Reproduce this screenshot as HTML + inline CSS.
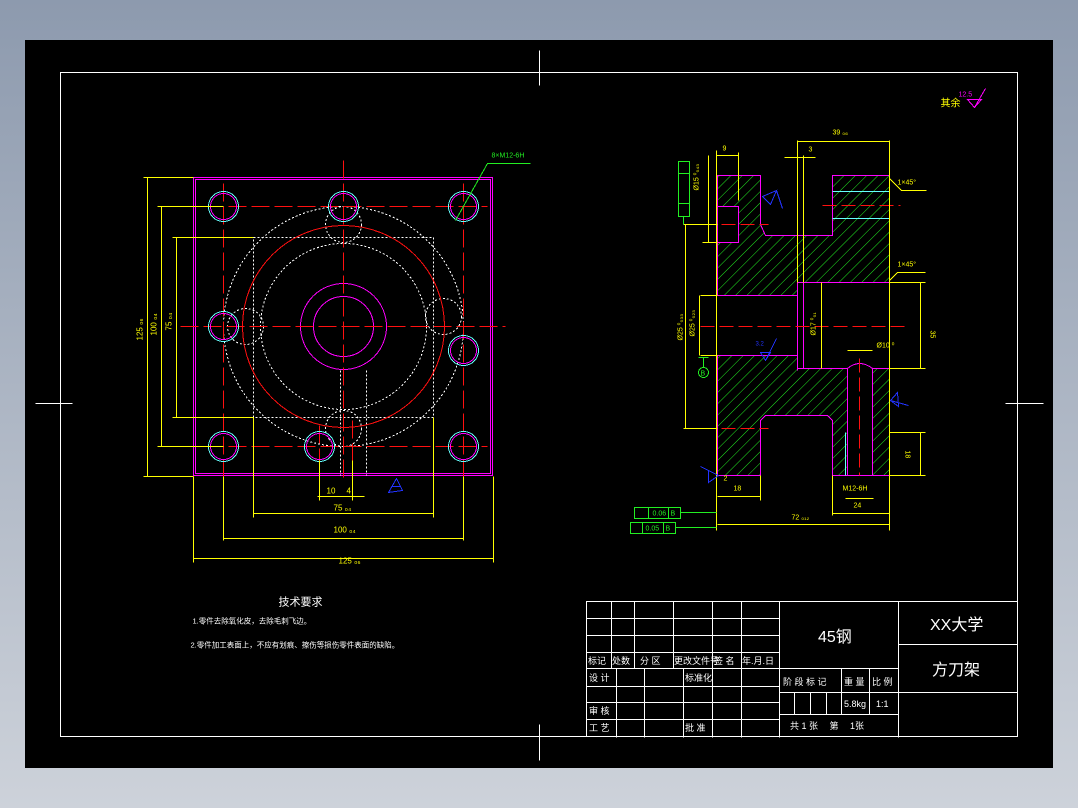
<!DOCTYPE html>
<html><head><meta charset="utf-8"><style>
html,body{margin:0;padding:0;width:1078px;height:808px;overflow:hidden;background:linear-gradient(#8d9aae,#cdd2da);}
svg{display:block}
text{font-family:"Liberation Sans","Noto Sans CJK SC",sans-serif;}
</style></head><body>
<svg width="1078" height="808" viewBox="0 0 1078 808" shape-rendering="crispEdges">
<defs>
<pattern id="h" width="8" height="8" patternUnits="userSpaceOnUse" patternTransform="rotate(45)">
<line x1="0" y1="0" x2="0" y2="8" stroke="#22ee22" stroke-width="1"/>
</pattern>
</defs>
<rect x="25" y="40" width="1028" height="728" fill="#000"/>
<g transform="translate(0.5,0.5)">
<rect x="60" y="72" width="957" height="664" fill="none" stroke="#fff" stroke-width="1"/>
<g stroke="#fff" stroke-width="1">
<line x1="539" y1="50" x2="539" y2="85"/><line x1="539" y1="724" x2="539" y2="760"/>
<line x1="35" y1="403" x2="72" y2="403"/><line x1="1005" y1="403" x2="1043" y2="403"/>
</g>

<!-- LEFT VIEW -->
<g fill="none">
<rect x="193" y="177" width="299" height="298" stroke="#ff00ff" stroke-width="1"/>
<rect x="195" y="179" width="295" height="294" stroke="#ff00ff" stroke-width="1"/>
<g stroke="#fff" stroke-dasharray="2,2" stroke-width="1">
<circle cx="343" cy="326" r="120"/><circle cx="343" cy="326" r="83"/>
<rect x="253" y="237" width="180" height="180"/>
<circle cx="343" cy="224" r="18"/><circle cx="245" cy="326" r="18"/><circle cx="443" cy="316" r="18"/>
<circle cx="343" cy="428" r="18"/>
<line x1="340" y1="370" x2="340" y2="475"/><line x1="366" y1="370" x2="366" y2="475"/>
</g>
<circle cx="343" cy="326" r="101" stroke="#ff1010" stroke-width="1"/>
<circle cx="343" cy="326" r="43" stroke="#ff00ff" stroke-width="1"/>
<circle cx="343" cy="326" r="30" stroke="#ff00ff" stroke-width="1"/>
<g stroke="#ff1010" stroke-width="1" stroke-dasharray="18,5">
<line x1="343" y1="160" x2="343" y2="480"/>
<line x1="180" y1="326" x2="505" y2="326"/>
<line x1="205" y1="206" x2="487" y2="206"/><line x1="205" y1="446" x2="487" y2="446"/>
<line x1="223" y1="183" x2="223" y2="490"/><line x1="463" y1="183" x2="463" y2="490"/>
<line x1="352" y1="420" x2="352" y2="475"/><line x1="319" y1="425" x2="319" y2="470"/>
</g>
<g stroke="#ff00ff" stroke-width="1">
<circle cx="223" cy="206" r="13"/><circle cx="343" cy="206" r="13"/><circle cx="463" cy="206" r="13"/>
<circle cx="223" cy="326" r="13"/><circle cx="463" cy="350" r="13"/>
<circle cx="223" cy="446" r="13"/><circle cx="319" cy="446" r="13"/><circle cx="463" cy="446" r="13"/>
</g>
<g stroke="#66ffff" stroke-width="1">
<circle cx="223" cy="206" r="15"/><circle cx="343" cy="206" r="15"/><circle cx="463" cy="206" r="15"/>
<circle cx="223" cy="326" r="15"/><circle cx="463" cy="350" r="15"/>
<circle cx="223" cy="446" r="15"/><circle cx="319" cy="446" r="15"/><circle cx="463" cy="446" r="15"/>
</g>
<g stroke="#ffff00" stroke-width="1">
<line x1="143" y1="177" x2="193" y2="177"/><line x1="143" y1="476" x2="193" y2="476"/><line x1="147" y1="177" x2="147" y2="476"/>
<line x1="157" y1="206" x2="223" y2="206"/><line x1="157" y1="446" x2="223" y2="446"/><line x1="161" y1="206" x2="161" y2="446"/>
<line x1="172" y1="237" x2="253" y2="237"/><line x1="172" y1="417" x2="253" y2="417"/><line x1="176" y1="237" x2="176" y2="417"/>
<line x1="193" y1="476" x2="193" y2="562"/><line x1="493" y1="476" x2="493" y2="562"/><line x1="193" y1="558" x2="493" y2="558"/>
<line x1="223" y1="476" x2="223" y2="540"/><line x1="463" y1="476" x2="463" y2="540"/><line x1="223" y1="538" x2="463" y2="538"/>
<line x1="253" y1="417" x2="253" y2="517"/><line x1="433" y1="417" x2="433" y2="517"/><line x1="253" y1="513" x2="433" y2="513"/>
<line x1="319" y1="460" x2="319" y2="500"/><line x1="352" y1="460" x2="352" y2="500"/><line x1="317" y1="496" x2="364" y2="496"/>
</g>
<polyline points="455,220 487,163 530,163" stroke="#22ee22" stroke-width="1"/>
<path d="M388 492 L396 478 L402 490 Z M392 486 L400 486" stroke="#2233ff" stroke-width="1"/>
</g>
<g fill="#ffff00" font-size="8">
<text x="338" y="563">125 ₀₆</text>
<text x="333" y="532">100 ₀₄</text>
<text x="333" y="510">75 ₀₄</text>
<text x="326" y="493">10</text><text x="346" y="493">4</text>
<text transform="translate(142,340) rotate(-90)">125 ₀₆</text>
<text transform="translate(156,335) rotate(-90)">100 ₀₄</text>
<text transform="translate(171,330) rotate(-90)">75 ₀₄</text>
</g>
<text x="491" y="157" fill="#22ee22" font-size="7">8×M12-6H</text>

<!-- RIGHT VIEW -->
<g stroke="#ff00ff" stroke-width="1">
<polygon fill="url(#h)" points="717,175 760,175 760,224 765,235 832,235 832,175 889,175 889,282 797,282 797,295 717,295"/>
<polygon fill="url(#h)" points="717,355 797,355 797,368 889,368 889,475 832,475 832,420 827,415 765,415 760,420 760,475 717,475"/>
<rect x="717" y="206" width="21" height="36" fill="#000"/>
<rect x="803" y="282" width="86" height="86" fill="#000"/>
<path d="M847 475 L847 368 Q859 358 872 368 L872 475 Z" fill="#000"/>
<line x1="797" y1="282" x2="797" y2="370"/>
</g>
<g stroke="#66ffff" stroke-width="1"><line x1="832" y1="191" x2="889" y2="191"/><line x1="832" y1="218" x2="889" y2="218"/><line x1="845" y1="432" x2="845" y2="475"/></g>
<g stroke="#ff1010" stroke-width="1" stroke-dasharray="14,5">
<line x1="700" y1="326" x2="905" y2="326"/><line x1="702" y1="224" x2="768" y2="224"/><line x1="702" y1="428" x2="768" y2="428"/>
<line x1="822" y1="205" x2="900" y2="205"/><line x1="859" y1="358" x2="859" y2="475"/>
</g>
<g stroke="#ffff00" stroke-width="1" fill="none">
<line x1="716" y1="155" x2="738" y2="155"/><line x1="716" y1="150" x2="716" y2="530"/><line x1="738" y1="152" x2="738" y2="200"/>
<line x1="797" y1="140" x2="797" y2="282"/><line x1="889" y1="140" x2="889" y2="530"/><line x1="797" y1="141" x2="889" y2="141"/>
<line x1="784" y1="157" x2="815" y2="157"/><line x1="803" y1="155" x2="803" y2="282"/>
<line x1="708" y1="155" x2="708" y2="242"/><line x1="702" y1="242" x2="717" y2="242"/>
<line x1="683" y1="224" x2="717" y2="224"/><line x1="685" y1="224" x2="685" y2="428"/><line x1="683" y1="428" x2="717" y2="428"/>
<line x1="700" y1="295" x2="717" y2="295"/><line x1="700" y1="355" x2="717" y2="355"/><line x1="699" y1="295" x2="699" y2="355"/>
<line x1="821" y1="282" x2="821" y2="368"/>
<line x1="889" y1="282" x2="925" y2="282"/><line x1="889" y1="368" x2="925" y2="368"/><line x1="920" y1="282" x2="920" y2="368"/>
<line x1="889" y1="432" x2="925" y2="432"/><line x1="889" y1="475" x2="925" y2="475"/><line x1="920" y1="432" x2="920" y2="475"/>
<line x1="847" y1="350" x2="872" y2="350"/>
<line x1="717" y1="496" x2="760" y2="496"/><line x1="760" y1="475" x2="760" y2="500"/>
<line x1="845" y1="498" x2="873" y2="498"/><line x1="832" y1="475" x2="832" y2="515"/><line x1="832" y1="513" x2="889" y2="513"/>
<line x1="717" y1="524" x2="889" y2="524"/>
<polyline points="889,178 901,190 926,190"/><polyline points="889,280 897,272 925,272"/>
</g>
<g fill="#ffff00" font-size="7">
<text x="722" y="150">9</text><text x="808" y="151">3</text><text x="832" y="134">39 ₀₆</text>
<text x="897" y="184">1×45°</text><text x="897" y="266">1×45°</text>
<text x="876" y="347">Ø10 ⁰</text><text x="791" y="519">72 ₀₁₂</text>
<text x="853" y="507">24</text><text x="733" y="490">18</text><text x="723" y="480">2</text>
<text x="842" y="490">M12-6H</text>
<text transform="translate(930,330) rotate(90)">35</text>
<text transform="translate(905,450) rotate(90)">18</text>
<text transform="translate(698,190) rotate(-90)">Ø15 ⁰₀₄₃</text>
<text transform="translate(682,340) rotate(-90)">Ø25 ⁰₀₃₃</text>
<text transform="translate(694,336) rotate(-90)">Ø25 ⁰₀₂₃</text>
<text transform="translate(815,335) rotate(-90)">Ø17 ⁰₀₁</text>
</g>
<g stroke="#22ee22" fill="none" stroke-width="1">
<rect x="678" y="161" width="11" height="55"/><line x1="678" y1="173" x2="689" y2="173"/><line x1="678" y1="203" x2="689" y2="203"/>
<line x1="683" y1="216" x2="683" y2="224"/>
<circle cx="703" cy="372" r="5"/><line x1="703" y1="357" x2="703" y2="367"/><line x1="698" y1="357" x2="708" y2="357"/>
<rect x="634" y="507" width="46" height="11"/><line x1="648" y1="507" x2="648" y2="518"/><line x1="668" y1="507" x2="668" y2="518"/><line x1="680" y1="512" x2="716" y2="512"/>
<rect x="630" y="522" width="45" height="11"/><line x1="642" y1="522" x2="642" y2="533"/><line x1="663" y1="522" x2="663" y2="533"/><line x1="675" y1="527" x2="716" y2="527"/>
</g>
<g fill="#22ee22" font-size="7"><text x="652" y="515">0.06</text><text x="670" y="515">B</text><text x="645" y="530">0.05</text><text x="665" y="530">B</text><text x="700" y="375">B</text></g>
<g stroke="#2233ff" fill="none" stroke-width="1">
<path d="M762 196 L776 190 L770 204 Z M776 190 L782 208"/>
<path d="M760 352 L770 352 L765 360 Z M765 360 L776 338"/>
<path d="M890 400 L897 392 L898 406 Z M890 400 L908 405"/>
<path d="M718 475 L708 470 L708 482 Z M718 475 L700 466"/>
</g>
<text x="755" y="345" fill="#2233ff" font-size="6">3.2</text>

<!-- roughness -->
<text x="940" y="106" fill="#ffff00" font-size="10">其余</text>
<text x="958" y="96" fill="#ff00ff" font-size="7">12.5</text>
<path d="M967 99 L981 99 L974 107 Z M974 107 L985 88" stroke="#ff00ff" fill="none"/>

<!-- tech requirements -->
<g fill="#fff">
<text x="278" y="605" font-size="11">技术要求</text>
<text x="192" y="623" font-size="7.5">1.零件去除氧化皮，去除毛刺飞边。</text>
<text x="190" y="647" font-size="7.5">2.零件加工表面上，不应有划痕、擦伤等损伤零件表面的缺陷。</text>
</g>

<!-- TITLE BLOCK -->
<g stroke="#fff" stroke-width="1" fill="none">
<rect x="586" y="601" width="431" height="135"/>
<line x1="586" y1="618" x2="779" y2="618"/><line x1="586" y1="635" x2="779" y2="635"/><line x1="586" y1="652" x2="779" y2="652"/>
<line x1="586" y1="668" x2="898" y2="668"/><line x1="586" y1="686" x2="779" y2="686"/><line x1="586" y1="702" x2="779" y2="702"/><line x1="586" y1="719" x2="779" y2="719"/>
<line x1="611" y1="601" x2="611" y2="668"/><line x1="634" y1="601" x2="634" y2="668"/><line x1="673" y1="601" x2="673" y2="668"/>
<line x1="712" y1="601" x2="712" y2="737"/><line x1="741" y1="601" x2="741" y2="737"/>
<line x1="616" y1="668" x2="616" y2="737"/><line x1="644" y1="668" x2="644" y2="737"/><line x1="683" y1="668" x2="683" y2="737"/>
<line x1="779" y1="601" x2="779" y2="737"/><line x1="898" y1="601" x2="898" y2="737"/>
<line x1="779" y1="692" x2="1017" y2="692"/><line x1="779" y1="714" x2="898" y2="714"/>
<line x1="898" y1="644" x2="1017" y2="644"/>
<line x1="841" y1="668" x2="841" y2="714"/><line x1="869" y1="668" x2="869" y2="714"/>
<line x1="794" y1="692" x2="794" y2="714"/><line x1="810" y1="692" x2="810" y2="714"/><line x1="826" y1="692" x2="826" y2="714"/>
</g>
</g>
<g fill="#fff" font-size="9">
<text x="588" y="664">标记</text><text x="612" y="664">处数</text><text x="640" y="664">分 区</text><text x="674" y="664">更改文件号</text><text x="714" y="664">签 名</text><text x="742" y="664">年.月.日</text>
<text x="589" y="681">设 计</text><text x="685" y="681">标准化</text>
<text x="589" y="714">审 核</text><text x="589" y="731">工 艺</text><text x="685" y="731">批 准</text>
<text x="783" y="685">阶 段 标 记</text><text x="844" y="685">重 量</text><text x="872" y="685">比 例</text>
<text x="844" y="707">5.8kg</text><text x="876" y="707">1:1</text>
<text x="790" y="729">共 1 张　 第 　1张</text>
<text x="818" y="642" font-size="16">45钢</text>
<text x="930" y="630" font-size="16">XX大学</text>
<text x="932" y="675" font-size="16">方刀架</text>
</g>
</svg>
</body></html>
